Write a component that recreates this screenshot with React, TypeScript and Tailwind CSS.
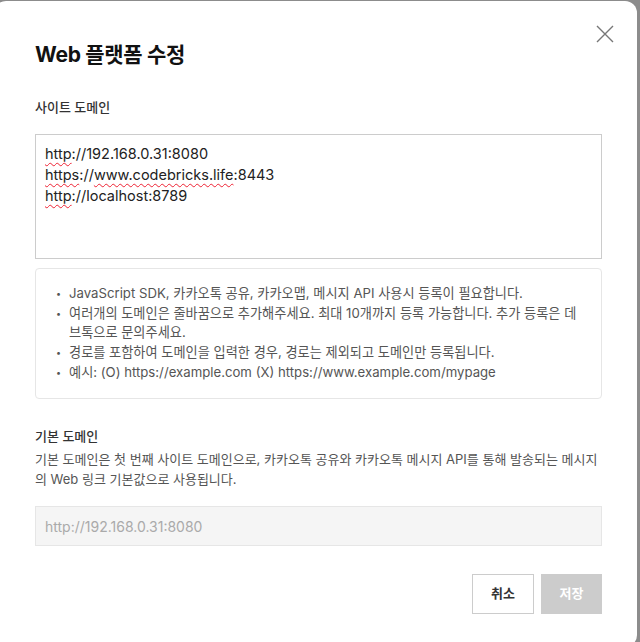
import React from "react";

const font = { fontFamily: '"Inter", "Noto Sans CJK KR", sans-serif' };

const Squiggle = ({ children }: { children: React.ReactNode }) => (
  <span className="underline decoration-wavy decoration-[#e23] decoration-1 underline-offset-[3px]">
    {children}
  </span>
);

const notes = [
  "JavaScript SDK, 카카오톡 공유, 카카오맵, 메시지 API 사용시 등록이 필요합니다.",
  "여러개의 도메인은 줄바꿈으로 추가해주세요. 최대 10개까지 등록 가능합니다. 추가 등록은 데브톡으로 문의주세요.",
  "경로를 포함하여 도메인을 입력한 경우, 경로는 제외되고 도메인만 등록됩니다.",
  "예시: (O) https://example.com (X) https://www.example.com/mypage",
];

const App = () => {
  return (
    <div className="w-[640px] h-[642px] overflow-hidden bg-[#8c8c8c]" style={font}>
      <div className="relative -ml-[6px] mt-px w-[643px] h-[646px] rounded-xl bg-white pl-[41px] pr-[35px] pt-[40px]">
        <button className="absolute right-[23px] top-[24px] text-[#777]">
          <svg width="18" height="18" viewBox="0 0 18 18" fill="none" stroke="currentColor" strokeWidth="1.4">
            <path d="M1 1L17 17M17 1L1 17" />
          </svg>
        </button>

        <h2 className="text-[21px] leading-[28px] font-bold text-[#111] tracking-[-0.3px]">
          Web 플랫폼 수정
        </h2>

        <div className="mt-[28px] text-[13px] leading-[20px] font-medium text-[#333]">
          사이트 도메인
        </div>

        <div className="mt-[17px] h-[125px] border border-[#cccccc] px-[9px] py-[8px] text-[14.5px] leading-[21px] text-[#222]">
          <div>
            <Squiggle>http</Squiggle>://192.168.0.31:8080
          </div>
          <div>
            <Squiggle>https</Squiggle>://<Squiggle>www.codebricks.life</Squiggle>:8443
          </div>
          <div>
            <Squiggle>http</Squiggle>://localhost:8789
          </div>
        </div>

        <div className="mt-[9px] rounded border border-[#e6e6e6] pl-[20px] pr-[16px] pt-[15px] pb-[16px]">
          <ul className="flex flex-col gap-[1px] text-[13.2px] leading-[19px] text-[#555]">
            {notes.map((n) => (
              <li key={n} className="flex">
                <span className="w-[13px] shrink-0 text-[9px]">•</span>
                <span>{n}</span>
              </li>
            ))}
          </ul>
        </div>

        <div className="mt-[27px] text-[13px] leading-[20px] font-medium text-[#333]">
          기본 도메인
        </div>
        <p className="mt-[3px] text-[13px] leading-[20px] text-[#555]">
          기본 도메인은 첫 번째 사이트 도메인으로, 카카오톡 공유와 카카오톡 메시지 API를 통해 발송되는 메시지의 Web 링크 기본값으로 사용됩니다.
        </p>

        <div className="mt-[17px] flex h-[40px] items-center border border-[#e6e6e6] bg-[#f5f5f5] px-[9px] text-[14px] text-[#aaaaaa]">
          http://192.168.0.31:8080
        </div>

        <div className="mt-[28px] flex justify-end gap-[7px]">
          <button className="h-[40px] w-[62px] border border-[#cccccc] bg-white text-[13px] font-semibold text-[#333]">
            취소
          </button>
          <button className="h-[40px] w-[61px] bg-[#cccccc] text-[13px] font-semibold text-white">
            저장
          </button>
        </div>
      </div>
    </div>
  );
};

export default App;
